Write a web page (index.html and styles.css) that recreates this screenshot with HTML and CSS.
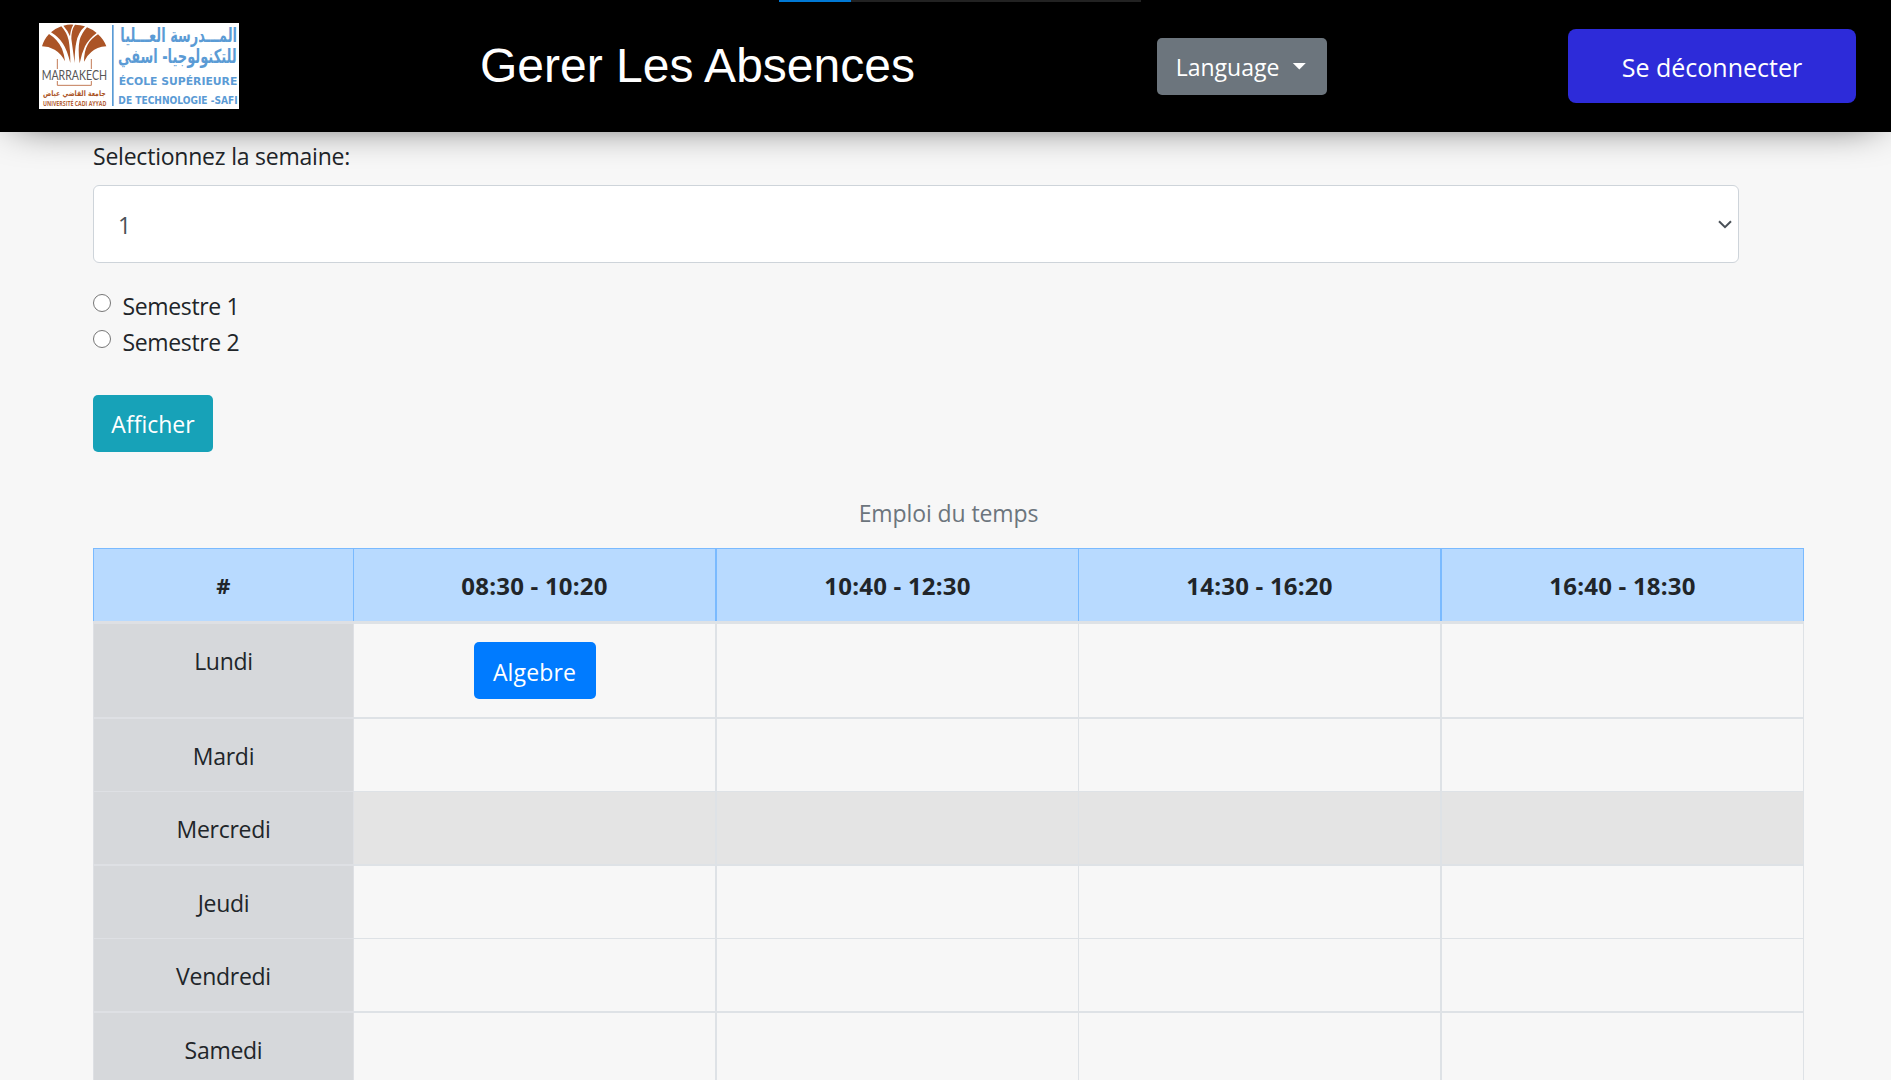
FILE: index.html
```html
<!DOCTYPE html>
<html lang="fr">
<head>
<meta charset="utf-8">
<title>Gerer Les Absences</title>
<link rel="stylesheet" href="styles.css">
</head>
<body>
<header class="topbar">
  <div class="progress"><div class="progress-fill"></div></div>
  <svg class="logo" viewBox="0 0 600 258" preserveAspectRatio="none" role="img" aria-label="École Supérieure de Technologie - Safi">
    <rect width="600" height="258" fill="#fff"/>
    <g fill="#ab5426">
      <path d="M9 70Q15 49 30 33Q56 49 69 77Q76 95 78 115Q67 92 47 80Q28 70 9 70Z"/>
      <path d="M36 28Q50 16 67 10Q84 29 89 52Q94 80 94 120Q84 80 72 62Q59 42 36 28Z"/>
      <path d="M73 8Q88 4 103 5Q95 18 93 40Q86 22 73 8Z"/>
      <path d="M108 5Q123 5 138 10Q117 29 112 58Q107 79 107 120Q101 76 97 47Q97 20 108 5Z"/>
      <path d="M144 13Q160 19 173 30Q150 47 138 70Q128 91 122 121Q116 78 122 51Q128 30 144 13Z"/>
      <path d="M177 34Q194 49 202 70Q173 72 157 87Q142 99 135 116Q135 84 146 65Q157 46 177 34Z"/>
    </g>
    <path d="M55 108V138M55 174V187H157V174M157 108V138" fill="none" stroke="#c37b57" stroke-width="3"/>
    <text x="8" y="170" class="logo-city" textLength="196" lengthAdjust="spacingAndGlyphs">MARRAKECH</text>
    <text x="106" y="219" class="logo-uni-ar" textLength="188" lengthAdjust="spacingAndGlyphs">جامعة القاضي عياض</text>
    <text x="12" y="249" class="logo-uni" textLength="190" lengthAdjust="spacingAndGlyphs">UNIVERSITÉ CADI AYYAD</text>
    <rect x="219" y="6" width="5" height="243" fill="#5b9bd5"/>
    <text x="419" y="56" class="logo-ar" textLength="350" lengthAdjust="spacingAndGlyphs">المـــدرسة العـــليا</text>
    <text x="415" y="121" class="logo-ar" textLength="356" lengthAdjust="spacingAndGlyphs">للتكنولوجيا- اسفي</text>
    <text x="239" y="186" class="logo-fr" textLength="356" lengthAdjust="spacingAndGlyphs">ÉCOLE SUPÉRIEURE</text>
    <text x="238" y="244" class="logo-fr logo-fr-small" textLength="358" lengthAdjust="spacingAndGlyphs">DE TECHNOLOGIE -SAFI</text>
  </svg>
  <h1 class="title">Gerer Les Absences</h1>
  <button class="btn btn-language">Language<span class="caret"></span></button>
  <button class="btn btn-logout">Se déconnecter</button>
</header>

<main class="content">
  <label class="field-label" for="semaine">Selectionnez la semaine:</label>
  <div class="select-wrap">
    <select class="select" id="semaine"><option>1</option></select>
    <svg class="chevron" viewBox="0 0 14 9"><path d="M1 1.2L7 7.2L13 1.2" fill="none" stroke="#495057" stroke-width="2"/></svg>
  </div>
  <div class="radios">
    <label class="radio-row"><input type="radio" name="semestre" class="radio"><span class="radio-text">Semestre 1</span></label>
    <label class="radio-row"><input type="radio" name="semestre" class="radio"><span class="radio-text">Semestre 2</span></label>
  </div>
  <button class="btn btn-show">Afficher</button>
  <div class="caption">Emploi du temps</div>
  <table class="timetable">
    <colgroup><col class="c-day"><col class="c-wide"><col class="c-slot"><col class="c-wide"><col class="c-slot"></colgroup>
    <thead>
      <tr><th class="hash">#</th><th>08:30 - 10:20</th><th>10:40 - 12:30</th><th>14:30 - 16:20</th><th>16:40 - 18:30</th></tr>
    </thead>
    <tbody>
      <tr class="r-tall"><td class="day">Lundi</td><td><button class="btn btn-course">Algebre</button></td><td></td><td></td><td></td></tr>
      <tr class="r-thin"><td class="day">Mardi</td><td></td><td></td><td></td><td></td></tr>
      <tr class="r-thick hovered"><td class="day">Mercredi</td><td></td><td></td><td></td><td></td></tr>
      <tr class="r-thin"><td class="day">Jeudi</td><td></td><td></td><td></td><td></td></tr>
      <tr class="r-thick"><td class="day">Vendredi</td><td></td><td></td><td></td><td></td></tr>
      <tr class="r-thin"><td class="day">Samedi</td><td></td><td></td><td></td><td></td></tr>
    </tbody>
  </table>
</main>
</body>
</html>
```
FILE: styles.css
```css
* { box-sizing: border-box; }

html, body { height: 100%; }

body {
  margin: 0;
  overflow: hidden;
  background: #f7f7f7;
  color: #212529;
  font-family: "Open Sans", "Noto Sans", sans-serif;
  font-size: 23px;
  line-height: 36px;
}

.topbar {
  position: relative;
  display: flex;
  align-items: center;
  height: 132px;
  padding: 0 35px 0 39px;
  background: #000;
  box-shadow: 0 0 44px -15px #000;
}

.progress {
  position: absolute;
  top: 0;
  left: 779px;
  width: 362px;
  height: 2px;
  background: #222;
}

.progress-fill { width: 72px; height: 2px; background: #0078d4; }

.logo { width: 200px; height: 86px; flex: none; }
.logo text { font-family: "DejaVu Sans", sans-serif; }
.logo .logo-city { font-family: Lato, sans-serif; font-size: 41px; fill: #555; }
.logo .logo-uni-ar { font-size: 23px; font-weight: 700; fill: #ab5426; text-anchor: middle; direction: rtl; }
.logo .logo-uni { font-family: "Open Sans", sans-serif; font-size: 23px; font-weight: 700; fill: #b5633a; }
.logo .logo-ar { font-size: 58px; font-weight: 700; fill: #5b9bd5; text-anchor: middle; direction: rtl; }
.logo .logo-fr { font-size: 34px; font-weight: 700; fill: #5b9bd5; }
.logo .logo-fr-small { font-size: 29px; }

.title {
  width: 440px;
  margin: 0 0 0 241px;
  color: #fff;
  font: 400 48px/58px "Liberation Sans", sans-serif;
  white-space: nowrap;
}

.btn {
  display: inline-flex;
  align-items: center;
  justify-content: center;
  height: 57px;
  padding: 2px 0 0;
  border: 0;
  border-radius: 5px;
  color: #fff;
  font: inherit;
  line-height: 36px;
}

.btn-language {
  width: 170px;
  margin-left: 237px;
  padding-right: 2px;
  background: #6c757d;
}

.caret {
  width: 14px;
  height: 7px;
  margin: -2px 0 0 13px;
  background: #fff;
  clip-path: polygon(0 0, 100% 0, 50% 100%);
}

.btn-logout {
  width: 288px;
  height: 74px;
  margin-left: auto;
  border-radius: 8px;
  background: #2d2bd9;
  font-size: 25px;
}

.content { padding: 6px 87px 0 93px; }

.field-label { display: block; height: 47px; letter-spacing: -0.22px; }

.select-wrap { position: relative; width: 1646px; height: 78px; }

.select {
  appearance: none;
  display: block;
  width: 100%;
  height: 78px;
  padding: 2px 24px 0;
  border: 1px solid #ced4da;
  border-radius: 6px;
  background: #fff;
  color: #495057;
  font: inherit;
}

.chevron { position: absolute; right: 7px; top: 35px; width: 14px; height: 9px; }

.radios { padding-top: 25px; }

.radio-row { display: flex; align-items: flex-start; height: 36px; letter-spacing: -0.36px; }

.radio {
  appearance: none;
  width: 18px;
  height: 18px;
  margin: 6px 11.5px 0 0;
  border: 1.5px solid #767676;
  border-radius: 50%;
  background: #fff;
}

.btn-show { width: 120px; margin-top: 35px; padding-top: 1px; background: #17a2b8; display: flex; }

.caption {
  margin-top: 43px;
  height: 53px;
  text-align: center;
  color: #6c757d;
  letter-spacing: -0.1px;
}

.timetable {
  width: 1711px;
  table-layout: fixed;
  border-collapse: separate;
  border-spacing: 0;
}

.c-day { width: 261px; }
.c-wide { width: 363px; }
.c-slot { width: 362px; }

th, td {
  height: 73px;
  padding: 0;
  border: 0 solid #dee2e6;
  border-right-width: 1px;
  border-bottom-width: 1px;
  text-align: center;
}

th:nth-child(even), td:nth-child(even) { border-right-width: 2px; }
th:first-child, td:first-child { border-left-width: 1px; }

thead th {
  height: 73px;
  padding-top: 2px;
  border-color: #7abaff;
  border-top-width: 1px;
  border-bottom: 0;
  background: #b8daff;
  font-size: 24px;
  font-weight: 700;
  letter-spacing: 0.2px;
}

thead .hash { font-size: 22px; padding-top: 0; }

.r-tall td { height: 98px; border-top: 3px solid #dee2e6; border-bottom-width: 2px; }
.r-thick td { height: 74px; border-bottom-width: 2px; }
.hovered td { background: #e4e4e4; }

tbody td.day {
  padding-top: 19px;
  border-color: #dee0e4;
  background: #d6d8db;
  vertical-align: top;
  letter-spacing: -0.28px;
}

.btn-course { width: 122px; padding-top: 3px; background: #007bff; vertical-align: top; letter-spacing: 0.15px; }
```
